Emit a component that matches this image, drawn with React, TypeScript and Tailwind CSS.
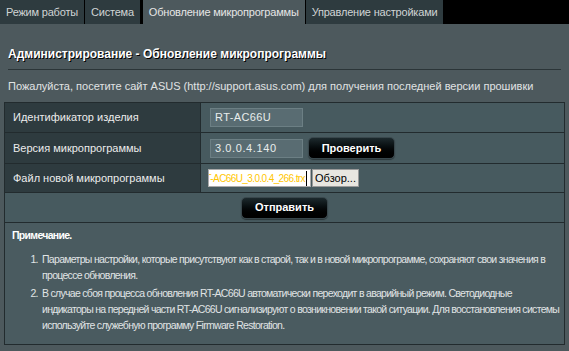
import React from "react";

const tabs = [
  { label: "Режим работы", active: false },
  { label: "Система", active: false },
  { label: "Обновление микропрограммы", active: true },
  { label: "Управление настройками", active: false },
];

function DarkButton({ children }: { children: React.ReactNode }) {
  return (
    <button className="flex h-[22px] w-[87px] items-center justify-center rounded-[5px] border border-[#39474c] bg-gradient-to-b from-[#1d2a2e] to-[#000000] text-[11px] font-bold text-white shadow-[0_1px_1px_rgba(0,0,0,0.4)]">
      {children}
    </button>
  );
}

export default function App() {
  return (
    <div className="h-[351px] w-[569px] overflow-hidden bg-[#4d595d]" style={{ fontFamily: '"Liberation Sans", Arial, sans-serif' }}>
      {/* tabs */}
      <div className="flex h-[24px] bg-black">
        {tabs.map((t) =>
          t.active ? (
            <div key={t.label} className="mr-px flex items-center border-l-[2px] border-black bg-[#4d595d] px-[6px] text-[11px] tracking-[-0.2px] text-[#e6e6e6]">
              {t.label}
            </div>
          ) : (
            <div key={t.label} className="mr-px flex items-center bg-[#2e3b3f] px-[6px] text-[11px] tracking-[-0.2px] text-[#d0d4d5]">
              {t.label}
            </div>
          )
        )}
      </div>

      <div className="px-[8px]">
        <h1 className="pt-[23px] text-[12px] font-bold leading-[14px] text-white [text-shadow:1px_1px_0_#000]">
          Администрирование - Обновление микропрограммы
        </h1>
        <div className="mt-[8px] h-px bg-[#2b3538]" />
        <p className="mt-[10px] text-[11px] leading-[13px] text-[#e0e3e4]">
          Пожалуйста, посетите сайт ASUS (http://support.asus.com) для получения последней версии прошивки
        </p>
      </div>

      <div className="mx-[4px] mt-[9px] border border-[#222b2e]">
        <div className="flex h-[30px] border-b border-[#222b2e]">
          <div className="flex w-[196px] items-center border-r border-[#222b2e] bg-[#2e3b3f] pl-[8px] text-[11px] text-[#ececec]">
            Идентификатор изделия
          </div>
          <div className="flex flex-1 items-center bg-[#475a5f] pl-[9px]">
            <div className="flex h-[19px] w-[93px] items-center border border-[#6c7f84] bg-[#596c72] pl-[4px] text-[11px] tracking-[0.4px] text-[#e8ecec]">
              RT-AC66U
            </div>
          </div>
        </div>
        <div className="flex h-[31px] border-b border-[#222b2e]">
          <div className="flex w-[196px] items-center border-r border-[#222b2e] bg-[#2e3b3f] pl-[8px] text-[11px] text-[#ececec]">
            Версия микропрограммы
          </div>
          <div className="flex flex-1 items-center gap-[5px] bg-[#475a5f] pl-[9px]">
            <div className="flex h-[19px] w-[93px] items-center border border-[#6c7f84] bg-[#596c72] pl-[4px] text-[11px] tracking-[0.6px] text-[#e8ecec]">
              3.0.0.4.140
            </div>
            <DarkButton>Проверить</DarkButton>
          </div>
        </div>
        <div className="flex h-[29px] border-b border-[#222b2e]">
          <div className="flex w-[196px] items-center border-r border-[#222b2e] bg-[#2e3b3f] pl-[8px] text-[11px] text-[#ececec]">
            Файл новой микропрограммы
          </div>
          <div className="flex flex-1 items-center gap-[1px] bg-[#475a5f] pl-[7px]">
            <div className="flex h-[18px] w-[103px] items-center justify-end overflow-hidden whitespace-nowrap border border-[#aaa] bg-white pr-[3px] text-[10px] tracking-[-0.6px] text-[#ffc600]">
              <span className="shrink-0 border-r border-black pr-px">T-AC66U_3.0.0.4_266.trx</span>
            </div>
            <button className="flex h-[18px] w-[47px] items-center justify-center border border-[#999] bg-[#e8e6e0] text-[11px] text-black">
              Обзор...
            </button>
          </div>
        </div>
        <div className="flex h-[30px] items-center justify-center border-b border-[#222b2e] bg-[#475a5f]">
          <DarkButton>Отправить</DarkButton>
        </div>
        <div className="h-[121px] bg-[#4a5b60] pl-[7px] pr-[2px] pt-[5px] text-[10.5px] tracking-[-0.7px] text-[#e0e4e5]">
          <div className="font-bold text-white">Примечание.</div>
          <ol className="mt-[7px] list-decimal pl-[28px] leading-[16px]">
            <li className="mb-[2px] pl-[2px]">
              Параметры настройки, которые присутствуют как в старой, так и в новой микропрограмме, сохраняют свои значения в процессе обновления.
            </li>
            <li className="pl-[2px]">
              В случае сбоя процесса обновления RT-AC66U автоматически переходит в аварийный режим. Светодиодные индикаторы на передней части RT-AC66U сигнализируют о возникновении такой ситуации. Для восстановления системы используйте служебную программу Firmware Restoration.
            </li>
          </ol>
        </div>
      </div>
    </div>
  );
}
